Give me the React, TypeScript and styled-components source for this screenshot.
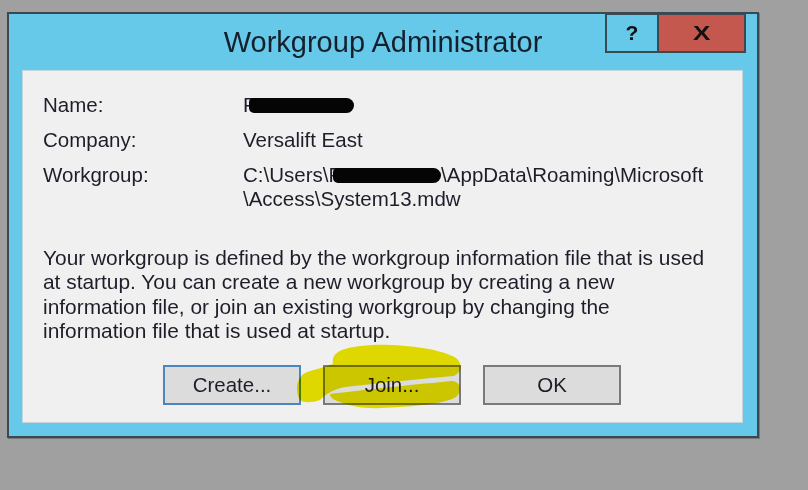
import React from "react";
import styled, { createGlobalStyle, css } from "styled-components";

const GlobalStyle = createGlobalStyle`
  html, body {
    margin: 0;
    padding: 0;
    background: #a0a0a0;
  }
  * {
    box-sizing: border-box;
  }
`;

const Desktop = styled.div`
  position: relative;
  width: 808px;
  height: 490px;
  padding: 12px 0 0 7px;
  overflow: hidden;
  font-family: "Liberation Sans", Arial, sans-serif;
  color: #1e1e2a;
`;

const Window = styled.div`
  width: 752px;
  border: 2px solid #3c4850;
  background: #66c9ea;
  box-shadow: 1px 1px 0 rgba(0, 0, 0, 0.25);
`;

const TitleBar = styled.div`
  display: grid;
  grid-template-columns: 1fr auto 1fr;
  height: 56px;
`;

const Title = styled.div`
  grid-column: 2;
  font-size: 29px;
  line-height: 56px;
  color: #14202c;
`;

const CaptionButtons = styled.div`
  grid-column: 3;
  justify-self: end;
  align-self: start;
  display: flex;
  margin-top: -1px;
  margin-right: 11px;
`;

const CaptionButton = styled.div<{ $close?: boolean }>`
  display: flex;
  align-items: center;
  justify-content: center;
  height: 40px;
  border: 2px solid #3a4a52;
  font-weight: bold;
  color: #111;
  ${({ $close }) =>
    $close
      ? css`
          width: 89px;
          margin-left: -2px;
          background: #c5584e;
          font-size: 20px;
          span {
            display: inline-block;
            transform: scaleX(1.3);
          }
        `
      : css`
          width: 54px;
          background: #66c9ea;
          font-size: 21px;
        `}
`;

const Body = styled.div`
  padding: 0 14px 13px 13px;
`;

const Panel = styled.div`
  background: #f0f0f0;
  border: 1px solid #c3d6df;
  padding: 22px 20px 17px 20px;
  font-size: 20.5px;
  line-height: 24px;
`;

const InfoGrid = styled.div`
  display: grid;
  grid-template-columns: 200px 1fr;
  row-gap: 11px;
`;

const Label = styled.div``;

const Value = styled.div`
  white-space: nowrap;
`;

const Redact = styled.span<{ $w: number; $shift: number }>`
  display: inline-block;
  width: ${({ $w }) => $w}px;
  height: 15px;
  margin-left: ${({ $shift }) => $shift}px;
  vertical-align: -1px;
  background: #050505;
  border-radius: 5px 9px 9px 6px;
`;

const Description = styled.p`
  margin: 35px 0 0;
  font-size: 20.9px;
  line-height: 24.3px;
  white-space: nowrap;
`;

const ButtonRow = styled.div`
  display: flex;
  gap: 22px;
  margin: 22px 0 0 120px;
`;

const DialogButton = styled.div<{ $default?: boolean }>`
  display: flex;
  align-items: center;
  justify-content: center;
  width: 138px;
  height: 40px;
  background: #dcdcdc;
  border: 2px solid ${({ $default }) => ($default ? "#4a86c0" : "#7a7a7a")};
  font-size: 20.5px;
`;

const Highlight = styled.svg`
  position: absolute;
  left: 0;
  top: 0;
  pointer-events: none;
  mix-blend-mode: multiply;
`;

const App = () => (
  <Desktop>
    <GlobalStyle />
    <Window>
      <TitleBar>
        <Title>Workgroup Administrator</Title>
        <CaptionButtons>
          <CaptionButton>?</CaptionButton>
          <CaptionButton $close>
            <span>X</span>
          </CaptionButton>
        </CaptionButtons>
      </TitleBar>
      <Body>
        <Panel>
          <InfoGrid>
            <Label>Name:</Label>
            <Value>
              P<Redact $w={105} $shift={-8} />
            </Value>
            <Label>Company:</Label>
            <Value>Versalift East</Value>
            <Label>Workgroup:</Label>
            <Value>
              C:\Users\P<Redact $w={108} $shift={-9} />
              \AppData\Roaming\Microsoft
              <br />
              \Access\System13.mdw
            </Value>
          </InfoGrid>
          <Description>
            Your workgroup is defined by the workgroup information file that is used
            <br />
            at startup. You can create a new workgroup by creating a new
            <br />
            information file, or join an existing workgroup by changing the
            <br />
            information file that is used at startup.
          </Description>
          <ButtonRow>
            <DialogButton $default>Create...</DialogButton>
            <DialogButton>Join...</DialogButton>
            <DialogButton>OK</DialogButton>
          </ButtonRow>
        </Panel>
      </Body>
    </Window>
    {/* yellow highlighter scribble over the Join button */}
    <Highlight width="808" height="490" viewBox="0 0 808 490">
      <g fill="#ece600">
        <path d="M300 400 C295 392 296 378 305 373 C315 369 326 367 333 364 C331 352 342 347 372 345 C405 344 440 349 456 358 C463 364 462 372 454 376 C420 379 370 384 345 387 C330 390 324 396 320 400 C312 403 303 403 300 400 Z" />
        <path d="M330 394 C370 389 420 384 452 381 C462 382 462 392 456 397 C445 404 410 407 380 408 C365 409 350 406 340 402 C333 400 330 397 330 394 Z" />
      </g>
    </Highlight>
  </Desktop>
);

export default App;
